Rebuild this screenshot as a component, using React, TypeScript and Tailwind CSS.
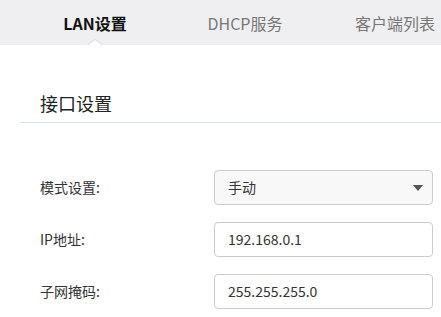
import React from "react";

const font = { fontFamily: '"Noto Sans CJK SC", "Noto Sans", sans-serif' };

export default function App() {
  const tabs = ["LAN设置", "DHCP服务", "客户端列表"];
  return (
    <div className="w-[441px] h-[317px] bg-white overflow-hidden" style={font}>
      <div className="relative h-[45px] bg-[#efeff1] flex pl-[20px] overflow-hidden">
        {tabs.map((t, i) => (
          <div
            key={t}
            className={
              i === 0
                ? "relative shrink-0 w-[150px] flex items-center justify-center text-[16px] font-bold text-[#111]"
                : "relative shrink-0 w-[150px] flex items-center justify-center text-[16px] text-[#777]"
            }
          >
            {t}
            {i === 0 && (
              <svg
                className="absolute bottom-0 left-[67px]"
                width="16"
                height="6"
                viewBox="0 0 16 6"
              >
                <polygon points="0,6.5 8,0.5 16,6.5" fill="#ffffff" stroke="#d9d9d9" strokeWidth="1" />
              </svg>
            )}
          </div>
        ))}
      </div>
      <div className="pl-[20px]">
        <div className="mt-[46px] pl-[20px] h-[24px] leading-[24px] text-[18px] text-[#222]">接口设置</div>
        <div className="mt-[7px] h-px bg-[#d8e2ec]" />
      </div>
      <div className="mt-[47px] flex flex-col gap-[17px]">
        <div className="flex items-center h-[35px]">
          <div className="w-[214px] pl-[40px] text-[14px] text-[#333]">模式设置:</div>
          <div className="w-[219px] h-[35px] rounded-[4px] border border-[#cccccc] bg-[#f8f8f8] flex items-center justify-between pl-[13px] pr-[9px]">
            <span className="text-[14px] text-[#333]">手动</span>
            <svg width="10" height="6" viewBox="0 0 10 6">
              <polygon points="0,0 10,0 5,6" fill="#555555" />
            </svg>
          </div>
        </div>
        <div className="flex items-center h-[35px]">
          <div className="w-[214px] pl-[40px] text-[14px] text-[#333]">IP地址:</div>
          <div className="w-[219px] h-[35px] rounded-[4px] border border-[#cccccc] bg-white flex items-center pl-[13px]">
            <span className="text-[14px] text-[#333]">192.168.0.1</span>
          </div>
        </div>
        <div className="flex items-center h-[35px]">
          <div className="w-[214px] pl-[40px] text-[14px] text-[#333]">子网掩码:</div>
          <div className="w-[219px] h-[35px] rounded-[4px] border border-[#cccccc] bg-white flex items-center pl-[13px]">
            <span className="text-[14px] text-[#333]">255.255.255.0</span>
          </div>
        </div>
      </div>
    </div>
  );
}
